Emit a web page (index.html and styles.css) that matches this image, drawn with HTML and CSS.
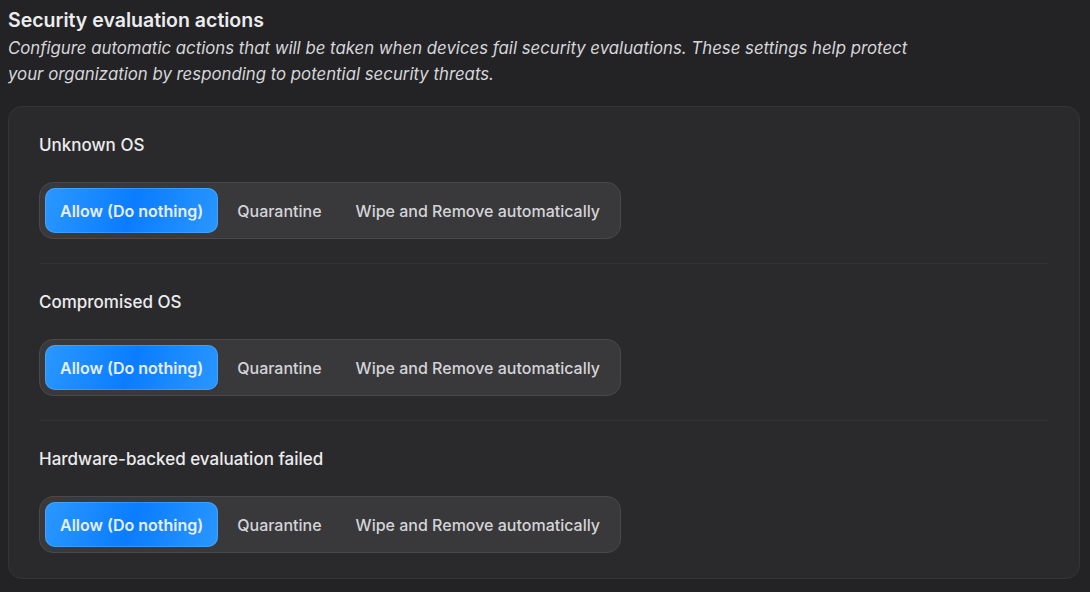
FILE: index.html
```html
<!DOCTYPE html>
<html>
<head>
<meta charset="utf-8">
<link rel="stylesheet" href="styles.css">
</head>
<body>
<div class="page">
  <h1 class="title">Security evaluation actions</h1>
  <p class="subtitle">Configure automatic actions that will be taken when devices fail security evaluations. These settings help protect your organization by responding to potential security threats.</p>
  <div class="card">
    <div class="section">
      <div class="label">Unknown OS</div>
      <div class="segmented">
        <button class="seg active">Allow (Do nothing)</button>
        <button class="seg">Quarantine</button>
        <button class="seg">Wipe and Remove automatically</button>
      </div>
    </div>
    <div class="section">
      <div class="label">Compromised OS</div>
      <div class="segmented">
        <button class="seg active">Allow (Do nothing)</button>
        <button class="seg">Quarantine</button>
        <button class="seg">Wipe and Remove automatically</button>
      </div>
    </div>
    <div class="section">
      <div class="label">Hardware-backed evaluation failed</div>
      <div class="segmented">
        <button class="seg active">Allow (Do nothing)</button>
        <button class="seg">Quarantine</button>
        <button class="seg">Wipe and Remove automatically</button>
      </div>
    </div>
  </div>
</div>
</body>
</html>
```
FILE: styles.css
```css
html, body {
  margin: 0;
  padding: 0;
  background: #232325;
  font-family: Inter, "Noto Sans", sans-serif;
  color: #e8e8ea;
}
.page {
  padding: 8px 10px 0 8px;
}
.title {
  margin: 0;
  font-size: 19.5px;
  line-height: 24px;
  font-weight: 600;
  color: #ececee;
}
.subtitle {
  margin: 3px 0 0;
  max-width: 920px;
  font-size: 16.8px;
  line-height: 26px;
  font-style: italic;
  color: #d6d6da;
}
.card {
  margin-top: 19px;
  background: #2a2a2c;
  border: 1px solid #353537;
  border-radius: 14px;
  padding: 0 30px;
}
.section {
  padding: 26px 0 24px;
  border-bottom: 1px solid #323234;
}
.section:last-child {
  border-bottom: none;
  padding-bottom: 25px;
}
.label {
  font-size: 17px;
  line-height: 24px;
  font-weight: 500;
  color: #ececee;
  margin-bottom: 25px;
}
.segmented {
  display: inline-flex;
  gap: 4px;
  padding: 5px;
  background: #39393b;
  border: 1px solid #49494b;
  border-radius: 14px;
}
.seg {
  font-family: inherit;
  font-size: 16px;
  font-weight: 500;
  height: 45px;
  padding: 0 15px;
  border: none;
  border-radius: 10px;
  background: transparent;
  color: #d4d4d8;
}
.seg.active {
  font-weight: 600;
  color: #e6eeff;
  background: linear-gradient(110deg, #2b98ff 0%, #0a7dff 50%, #2a97ff 100%);
  box-shadow: inset 0 0 0 1px rgba(120, 190, 255, 0.35);
}
```
